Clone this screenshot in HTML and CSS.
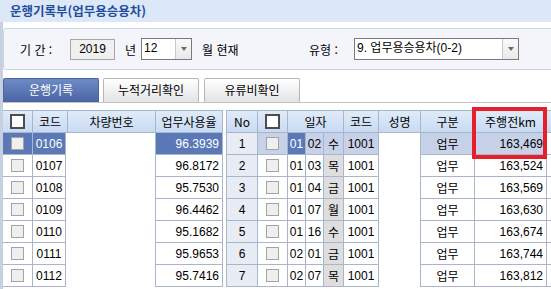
FILE: index.html
```html
<!DOCTYPE html>
<html lang="ko">
<head>
<meta charset="utf-8">
<title>운행기록부</title>
<link rel="stylesheet" href="styles.css">
</head>
<body>
<div class="title">운행기록부(업무용승용차)</div>
<div class="main">
  <div class="filter">
    <span class="lbl lbl-period">기 간 :</span>
    <span class="yearbox">2019</span>
    <span class="lbl lbl-year">년</span>
    <span class="select sel-month"><span class="val">12</span><span class="btn"><i class="arrow"></i></span></span>
    <span class="lbl lbl-month">월 현재</span>
    <span class="lbl lbl-type">유형 :</span>
    <span class="select sel-type"><span class="val">9. 업무용승용차(0-2)</span><span class="btn"><i class="arrow"></i></span></span>
  </div>

  <div class="tabs">
    <div class="tab active">운행기록</div>
    <div class="tab">누적거리확인</div>
    <div class="tab tab3">유류비확인</div>
  </div>

  <div class="grids">
    <div class="grid grid-left">
      <div class="row head">
        <div class="c lc-chk"><span class="hchk"></span></div>
        <div class="c lc-code">코드</div>
        <div class="c lc-veh">차량번호</div>
        <div class="c lc-rate">업무사용율</div>
      </div>
      <div class="row sel">
        <div class="c lb-chk"><span class="chk"></span></div>
        <div class="c lb-code num">0106</div>
        <div class="c lb-veh blank"></div>
        <div class="c lb-rate num">96.3939</div>
      </div>
      <div class="row">
        <div class="c lb-chk"><span class="chk"></span></div>
        <div class="c lb-code num">0107</div>
        <div class="c lb-veh blank"></div>
        <div class="c lb-rate num">96.8172</div>
      </div>
      <div class="row">
        <div class="c lb-chk"><span class="chk"></span></div>
        <div class="c lb-code num">0108</div>
        <div class="c lb-veh blank"></div>
        <div class="c lb-rate num">95.7530</div>
      </div>
      <div class="row">
        <div class="c lb-chk"><span class="chk"></span></div>
        <div class="c lb-code num">0109</div>
        <div class="c lb-veh blank"></div>
        <div class="c lb-rate num">96.4462</div>
      </div>
      <div class="row">
        <div class="c lb-chk"><span class="chk"></span></div>
        <div class="c lb-code num">0110</div>
        <div class="c lb-veh blank"></div>
        <div class="c lb-rate num">95.1682</div>
      </div>
      <div class="row">
        <div class="c lb-chk"><span class="chk"></span></div>
        <div class="c lb-code num">0111</div>
        <div class="c lb-veh blank"></div>
        <div class="c lb-rate num">95.9653</div>
      </div>
      <div class="row">
        <div class="c lb-chk"><span class="chk"></span></div>
        <div class="c lb-code num">0112</div>
        <div class="c lb-veh blank"></div>
        <div class="c lb-rate num">95.7416</div>
      </div>
    </div>

    <div class="grid grid-right">
      <div class="row head">
        <div class="c rc-no">No</div>
        <div class="c rc-chk"><span class="hchk"></span></div>
        <div class="c rc-date">일자</div>
        <div class="c rc-code">코드</div>
        <div class="c rc-name">성명</div>
        <div class="c rc-kind">구분</div>
        <div class="c rc-km">주행전km</div>
        <div class="c rc-extra"></div>
      </div>
      <div class="row sel">
        <div class="c rc-no no">1</div>
        <div class="c rc-chk"><span class="chk"></span></div>
        <div class="c rc-m num focus">01</div>
        <div class="c rc-d num">02</div>
        <div class="c rc-w wd">수</div>
        <div class="c rc-code num">1001</div>
        <div class="c rc-name blank"></div>
        <div class="c rc-kind">업무</div>
        <div class="c rc-km num">163,469</div>
        <div class="c rc-extra"></div>
      </div>
      <div class="row">
        <div class="c rc-no no">2</div>
        <div class="c rc-chk"><span class="chk"></span></div>
        <div class="c rc-m num">01</div>
        <div class="c rc-d num">03</div>
        <div class="c rc-w wd">목</div>
        <div class="c rc-code num">1001</div>
        <div class="c rc-name blank"></div>
        <div class="c rc-kind">업무</div>
        <div class="c rc-km num">163,524</div>
        <div class="c rc-extra"></div>
      </div>
      <div class="row">
        <div class="c rc-no no">3</div>
        <div class="c rc-chk"><span class="chk"></span></div>
        <div class="c rc-m num">01</div>
        <div class="c rc-d num">04</div>
        <div class="c rc-w wd">금</div>
        <div class="c rc-code num">1001</div>
        <div class="c rc-name blank"></div>
        <div class="c rc-kind">업무</div>
        <div class="c rc-km num">163,569</div>
        <div class="c rc-extra"></div>
      </div>
      <div class="row">
        <div class="c rc-no no">4</div>
        <div class="c rc-chk"><span class="chk"></span></div>
        <div class="c rc-m num">01</div>
        <div class="c rc-d num">07</div>
        <div class="c rc-w wd">월</div>
        <div class="c rc-code num">1001</div>
        <div class="c rc-name blank"></div>
        <div class="c rc-kind">업무</div>
        <div class="c rc-km num">163,630</div>
        <div class="c rc-extra"></div>
      </div>
      <div class="row">
        <div class="c rc-no no">5</div>
        <div class="c rc-chk"><span class="chk"></span></div>
        <div class="c rc-m num">01</div>
        <div class="c rc-d num">16</div>
        <div class="c rc-w wd">수</div>
        <div class="c rc-code num">1001</div>
        <div class="c rc-name blank"></div>
        <div class="c rc-kind">업무</div>
        <div class="c rc-km num">163,674</div>
        <div class="c rc-extra"></div>
      </div>
      <div class="row">
        <div class="c rc-no no">6</div>
        <div class="c rc-chk"><span class="chk"></span></div>
        <div class="c rc-m num">02</div>
        <div class="c rc-d num">01</div>
        <div class="c rc-w wd">금</div>
        <div class="c rc-code num">1001</div>
        <div class="c rc-name blank"></div>
        <div class="c rc-kind">업무</div>
        <div class="c rc-km num">163,744</div>
        <div class="c rc-extra"></div>
      </div>
      <div class="row">
        <div class="c rc-no no">7</div>
        <div class="c rc-chk"><span class="chk"></span></div>
        <div class="c rc-m num">02</div>
        <div class="c rc-d num">07</div>
        <div class="c rc-w wd">목</div>
        <div class="c rc-code num">1001</div>
        <div class="c rc-name blank"></div>
        <div class="c rc-kind">업무</div>
        <div class="c rc-km num">163,812</div>
        <div class="c rc-extra"></div>
      </div>
    </div>
    <div class="highlight"></div>
  </div>
</div>
</body>
</html>
```

FILE: styles.css
```css
* { box-sizing: border-box; }

body {
  margin: 0;
  width: 551px;
  height: 289px;
  overflow: hidden;
  background: #ffffff;
  color: #000;
  font-family: "Liberation Sans", "Noto Sans CJK KR", sans-serif;
  font-size: 12px;
}

.title {
  height: 22px;
  line-height: 22px;
  padding-left: 10px;
  background: #dce8f8;
  color: #1f4e9c;
  font-family: "Noto Sans CJK KR", sans-serif;
  font-weight: bold;
  font-size: 12.5px;
}

.main {
  border-left: 3px solid #c7d0e1;
  height: 267px;
  padding-top: 6px;
  overflow: hidden;
}

/* filter panel */
.filter {
  height: 42px;
  margin-right: -4px;
  background: #f3f5fa;
  border: 1px solid #cbd4e4;
  border-radius: 3px;
  display: flex;
  align-items: center;
  padding-left: 16px;
  font-family: "Noto Sans CJK KR", sans-serif;
}

.lbl { white-space: nowrap; font-size: 12px; flex-shrink: 0; }
.lbl-period { width: 50px; }
.lbl-year { margin-left: 10px; width: 14px; }
.lbl-month { margin-left: 10px; width: 107px; }
.lbl-type { width: 45px; }

.yearbox {
  flex-shrink: 0;
  width: 45px;
  height: 21px;
  border: 1px solid #a6a6a6;
  background: #f0f0f0;
  text-align: center;
  line-height: 19px;
  font-family: "Liberation Sans", sans-serif;
  font-size: 12px;
}

.select {
  flex-shrink: 0;
  height: 22px;
  border: 1px solid #7a7a7a;
  background: #fff;
  display: flex;
  font-family: "Liberation Sans", "Noto Sans CJK KR", sans-serif;
}
.sel-month { width: 51px; margin-left: 2px; }
.sel-type { width: 165px; }
.select .val {
  flex: 1;
  padding-left: 2px;
  line-height: 18px;
  white-space: nowrap;
  overflow: hidden;
}
.select .btn {
  width: 16px;
  border-left: 1px solid #c9c9c9;
  background: linear-gradient(#fafafa, #e9e9e9);
  display: flex;
  align-items: center;
  justify-content: center;
}
.arrow {
  width: 0;
  height: 0;
  border-left: 3px solid transparent;
  border-right: 3px solid transparent;
  border-top: 4px solid #6a6a6a;
}

/* tabs */
.tabs {
  display: flex;
  margin-top: 8px;
  height: 25px;
  border-bottom: 1px solid #c4c4c4;
  font-family: "Noto Sans CJK KR", sans-serif;
}
.tab {
  width: 96px;
  height: 24px;
  margin-right: 4px;
  border: 1px solid #b6b6b6;
  border-bottom: none;
  border-radius: 2px 2px 0 0;
  background: linear-gradient(#ffffff, #e3e3e3);
  text-align: center;
  line-height: 22px;
  font-size: 12px;
}
.tab3 { margin-left: 1px; }
.tab.active {
  background: linear-gradient(#6f8bc6, #4864a4);
  border-color: #4a64a0;
  color: #ffffff;
}

/* grids */
.grids {
  position: relative;
  display: flex;
  margin-top: 7px;
  gap: 3px;
}
.grid {
  border-top: 1px solid #a9b5cb;
}
.grid-left { width: 220px; flex-shrink: 0; }
.grid-right {
  flex: 1;
  min-width: 0;
  overflow: hidden;
  border-left: 1px solid #a9b5cb;
}

.row {
  display: flex;
  height: 22px;
}
.c {
  flex-shrink: 0;
  height: 22px;
  border-right: 1px solid #a9b5cb;
  border-bottom: 1px solid #a9b5cb;
  display: flex;
  align-items: center;
  justify-content: center;
  white-space: nowrap;
  overflow: hidden;
  font-family: "Noto Sans CJK KR", sans-serif;
}
.num { font-family: "Liberation Sans", sans-serif; }

.head .c {
  background: linear-gradient(#e0ebf9, #c8daf2);
  font-size: 12px;
}

.blank { border-bottom: none; background: #fff; }

/* left widths */
.lc-chk, .lb-chk { width: 30px; }
.lc-code { width: 35px; }
.lc-veh { width: 88px; }
.lc-rate { width: 67px; }
.lb-code { width: 33px; }
.lb-veh { width: 90px; }
.lb-rate { width: 67px; justify-content: flex-end; padding-right: 3px; }

.grid-left .sel .lb-chk,
.grid-left .sel .lb-code,
.grid-left .sel .lb-rate {
  background: #5b79b7;
  color: #ffffff;
}

/* right widths */
.rc-no { width: 31px; }
.rc-chk { width: 30px; }
.rc-date { width: 56px; }
.rc-m, .rc-d { width: 18px; }
.rc-w { width: 20px; }
.rc-code { width: 35px; }
.rc-name { width: 42px; }
.rc-kind { width: 54px; }
.rc-km { width: 72px; }
.rc-extra { width: 40px; }
.row:not(.head) .rc-km { justify-content: flex-end; padding-right: 3px; }

.no { background: #e7ecf5; font-family: "Liberation Sans", sans-serif; }
.wd { background: #dedede; }

.grid-right .sel .rc-chk,
.grid-right .sel .rc-d,
.grid-right .sel .rc-w,
.grid-right .sel .rc-code,
.grid-right .sel .rc-kind,
.grid-right .sel .rc-km {
  background: #c7d2e8;
}
.grid-right .sel .focus {
  background: #5b79b7;
  color: #ffffff;
}

/* checkboxes */
.hchk {
  width: 15px;
  height: 15px;
  background: #ffffff;
  border: 2px solid #4d4d4d;
}
.chk {
  width: 13px;
  height: 13px;
  background: #efefef;
  border: 1px solid #a3a3a3;
}

/* annotation */
.highlight {
  position: absolute;
  left: 469px;
  top: -3px;
  width: 75px;
  height: 52px;
  border: 4px solid #e5202b;
}
```
